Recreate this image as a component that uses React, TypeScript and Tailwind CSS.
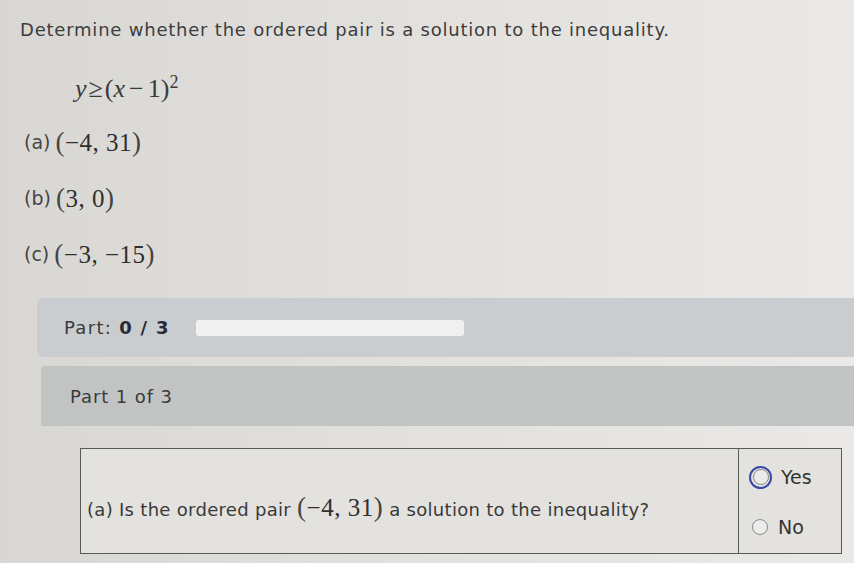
import React from 'react';

function Pair({ children }: { children: React.ReactNode }) {
  return (
    <span className="font-['Liberation_Serif',serif] text-[25px] text-[#2f2f2f] tracking-[0.5px]">
      <span className="text-[27px] text-[#444]">(</span>
      {children}
      <span className="text-[27px] text-[#444]">)</span>
    </span>
  );
}

function Item({ label, pair }: { label: string; pair: string }) {
  return (
    <div className="h-[36px] flex items-center gap-[5px]">
      <span className="text-[19px] text-[#444]">{label}</span>
      <Pair>{pair}</Pair>
    </div>
  );
}

export default function App() {
  return (
    <div className="w-[854px] h-[563px] overflow-hidden bg-gradient-to-r from-[#d9d7d4] via-[#e3e1de] to-[#eae9e7] font-['DejaVu_Sans',sans-serif] text-[#3d3d3d]">
      <div className="pl-[20px] pt-[18px] text-[18px] leading-[24px] tracking-[0.78px]">
        Determine whether the ordered pair is a solution to the inequality.
      </div>

      <div className="pl-[75px] mt-[31px] h-[32px] leading-[32px] font-['Liberation_Serif',serif] text-[26px] text-[#3a3a3a]">
        <i>y</i>
        <span className="mx-[2px]">≥</span>
        <span>(</span>
        <i>x</i>
        <span className="mx-[4px]">−</span>
        <span>1</span>
        <span>)</span>
        <sup className="text-[18px]">2</sup>
      </div>

      <div className="pl-[24px] mt-[19px] flex flex-col gap-[20px]">
        <Item label="(a)" pair="−4, 31" />
        <Item label="(b)" pair="3, 0" />
        <Item label="(c)" pair="−3, −15" />
      </div>

      <div className="ml-[37px] mt-[26px] h-[59px] rounded-l-[6px] bg-[#c9cdd0] flex items-center pl-[27px]">
        <span className="text-[18px] tracking-[1.3px] text-[#3a3a3a]">
          Part: <b className="text-[#2a2a36]">0 / 3</b>
        </span>
        <div className="ml-[26px] w-[268px] h-[16px] rounded-[3px] bg-[#eff0ef]" />
      </div>

      <div className="ml-[41px] mt-[9px] h-[60px] rounded-tl-[4px] bg-[#c2c4c3] flex items-center pl-[29px]">
        <span className="text-[18px] tracking-[0.9px] text-[#3a3a3a]">Part 1 of 3</span>
      </div>

      <div className="ml-[80px] mt-[22px] w-[762px] h-[106px] border border-[#5a5a5a] flex bg-[#e3e2df]">
        <div className="flex-1 flex items-center pl-[6px] pt-[12px]">
          <span className="text-[18px] tracking-[0.3px] text-[#3a3a3a]">
            (a) Is the ordered pair <Pair>−4, 31</Pair> a solution to the inequality?
          </span>
        </div>
        <div className="w-[103px] border-l border-[#5a5a5a] flex flex-col justify-between pt-[14px] pb-[12px]">
          <label className="flex items-center gap-[9px] pl-[10px]">
            <span className="w-[23px] h-[23px] rounded-full border-[2px] border-[#3848a8] flex items-center justify-center">
              <span className="w-[16px] h-[16px] rounded-full border border-[#8a8a8a] bg-[#ebebea]" />
            </span>
            <span className="text-[19px] text-[#333]">Yes</span>
          </label>
          <label className="flex items-center gap-[10px] pl-[13px]">
            <span className="w-[16px] h-[16px] rounded-full border border-[#8a8a8a] bg-[#ebebea]" />
            <span className="text-[19px] text-[#333]">No</span>
          </label>
        </div>
      </div>
    </div>
  );
}
